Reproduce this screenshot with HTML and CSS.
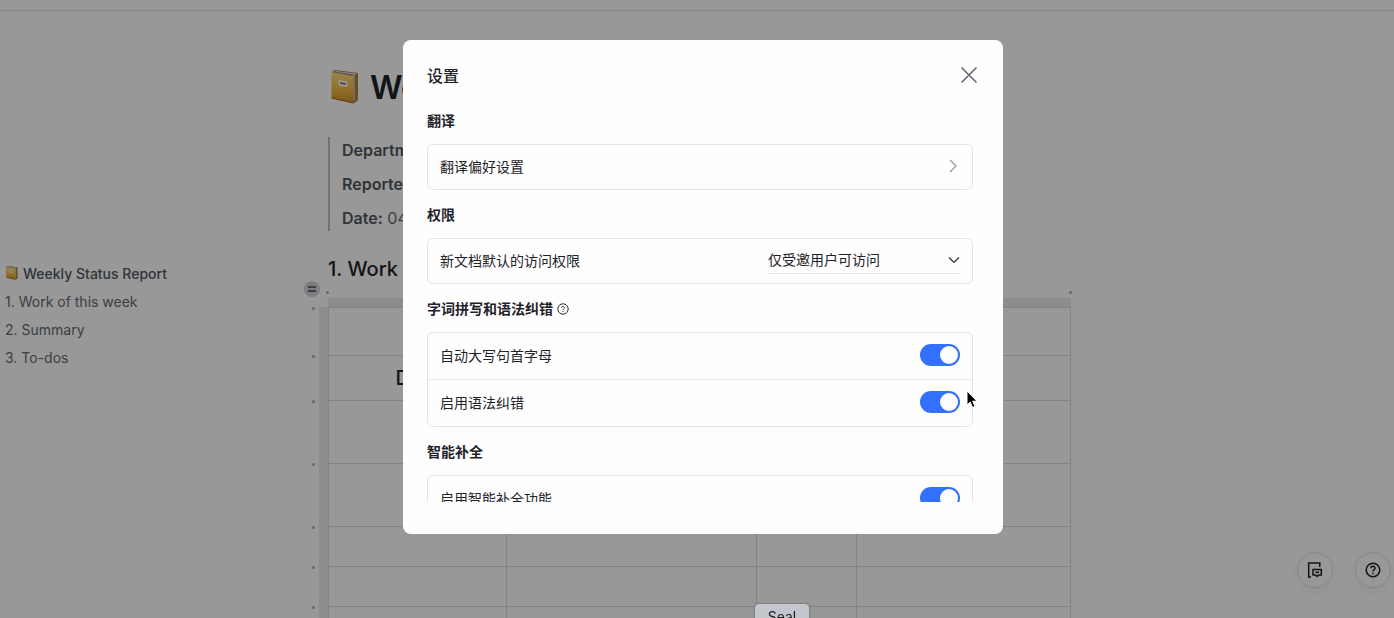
FILE: index.html
```
<!DOCTYPE html>
<html lang="zh-CN">
<head>
    <meta charset="UTF-8">
    <meta name="viewport" content="width=device-width, initial-scale=1.0">
    <title>Weekly Status Report</title>
    <link rel="stylesheet" href="styles.css">
</head>
<body>
    <svg class="defs" aria-hidden="true">
        <defs>
            <linearGradient id="cover" x1="0" y1="0" x2="0" y2="1">
                <stop offset="0" stop-color="#ffdc83"/>
                <stop offset="0.6" stop-color="#efb93f"/>
                <stop offset="1" stop-color="#c98c22"/>
            </linearGradient>
        </defs>
        <symbol id="book" viewBox="0 0 28 34">
            <path d="M1 2 4 0 27 3 27 30 23 33 1 28Z" fill="#a87835"/>
            <path d="M2 2 5 1 25 3.500 24 30 22 31 21 5Z" fill="#e9e4e8"/>
            <path d="M3 2 23 5 23 31" fill="none" stroke="#8b8490" stroke-width="1"/>
            <path d="M24 5 27 3 27 30 24 32.500Z" fill="#b4803b"/>
            <path d="M0.500 2 22.500 6 22.500 33 0.500 28Z" fill="url(#cover)"/>
            <path d="M0.500 28 22.500 33" stroke="#955c22" stroke-width="1"/>
            <path d="M8 10 16 11.300 Q17 13.500 16 17 L8 15.700 Q6.700 13 8 10Z" fill="#fffaf0"/>
            <path d="M9 13 15 14" stroke="#77664c" stroke-width="1.300"/>
        </symbol>
    </svg>

    <header class="topbar"></header>
    <div class="page">
        <nav class="outline">
            <a class="outline-title" href="#top"><svg class="book-small"><use href="#book"/></svg>Weekly Status Report</a>
            <a href="#work">1. Work of this week</a>
            <a href="#summary">2. Summary</a>
            <a href="#todos">3. To-dos</a>
        </nav>
        <main class="doc" id="top">
            <h1><svg class="book"><use href="#book"/></svg>Weekly Status Report</h1>
            <blockquote>
                <p><b>Department:</b></p>
                <p><b>Reporter:</b></p>
                <p><b>Date:</b> 04</p>
            </blockquote>
            <h2 id="work">1. Work of this week</h2>
            <div class="table-top">
                <button class="block-menu" aria-label="Block menu"></button>
                <div class="column-handle"></div>
            </div>
            <table>
                <colgroup>
                    <col class="col-handle">
                    <col class="col-date">
                    <col class="col-work">
                    <col class="col-status">
                    <col>
                </colgroup>
                <tr class="row-title"><td class="handle"></td><td colspan="4"></td></tr>
                <tr class="row-head"><td class="handle"></td><th>Date</th><th></th><th></th><th></th></tr>
                <tr class="row-tall"><td class="handle"></td><td></td><td></td><td></td><td></td></tr>
                <tr class="row-tall"><td class="handle"></td><td></td><td></td><td></td><td></td></tr>
                <tr><td class="handle"></td><td></td><td></td><td></td><td></td></tr>
                <tr><td class="handle"></td><td></td><td></td><td></td><td></td></tr>
                <tr><td class="handle"></td><td></td><td></td><td></td><td></td></tr>
            </table>
        </main>
    </div>

    <div class="float-buttons">
        <button aria-label="Comments">
            <svg width="18" height="18" viewBox="0 0 18 18" fill="none" stroke="#1f2329" stroke-width="1.500">
                <path d="M5 16H2.700V2H13.800V6"/>
                <path d="M7 8.500H15.300V14H12.800L11.200 15.500 9.600 14H7Z"/>
                <path d="M9.500 11.300H13"/>
            </svg>
        </button>
        <button aria-label="Help">
            <svg width="18" height="18" viewBox="0 0 18 18" fill="none" stroke="#1f2329" stroke-width="1.500">
                <circle cx="9" cy="9" r="6.800"/>
                <path d="M6.900 7.300C6.900 4.600 11.200 4.700 11.100 7.200 11 8.700 9 8.700 9 10.500"/>
                <path d="M9 11.700V13.200"/>
            </svg>
        </button>
    </div>

    <div class="overlay">
        <section class="modal" role="dialog" aria-modal="true" aria-labelledby="modalTitle">
            <div class="modal-header">
                <h3 id="modalTitle">设置</h3>
                <button class="close" aria-label="关闭">
                    <svg width="24" height="24" viewBox="0 0 24 24" fill="none" stroke="#646a73" stroke-width="1.600"><path d="M4.500 4.500 19.500 19.500M19.500 4.500 4.500 19.500"/></svg>
                </button>
            </div>
            <div class="modal-body">
                <h4>翻译</h4>
                <div class="card">
                    <button class="row">
                        <span>翻译偏好设置</span>
                        <svg width="14" height="14" viewBox="0 0 14 14" fill="none" stroke="#8f959e" stroke-width="1.200"><path d="M4 1 10 7 4 13"/></svg>
                    </button>
                </div>
                <h4>权限</h4>
                <div class="card">
                    <div class="row">
                        <label for="access">新文档默认的访问权限</label>
                        <div class="select">
                            <select id="access"><option>仅受邀用户可访问</option></select>
                            <svg width="12" height="12" viewBox="0 0 12 12" fill="none" stroke="#2b2f36" stroke-width="1.200"><path d="M1 3.500 6 8.500 11 3.500"/></svg>
                        </div>
                    </div>
                </div>
                <h4>字词拼写和语法纠错
                    <svg width="12" height="12" viewBox="0 0 12 12" fill="none" stroke="#2b2f36" stroke-width="1"><circle cx="6" cy="6" r="5.200"/><path d="M4.500 4.900C4.500 3 7.500 3 7.500 4.800 7.500 5.800 6 5.900 6 7.200M6 8V9"/></svg>
                </h4>
                <div class="card">
                    <div class="row toggle-row">
                        <label for="capital">自动大写句首字母</label>
                        <input class="switch" type="checkbox" id="capital" checked>
                    </div>
                    <div class="row toggle-row">
                        <label for="grammar">启用语法纠错</label>
                        <input class="switch" type="checkbox" id="grammar" checked>
                    </div>
                </div>
                <h4>智能补全</h4>
                <div class="card">
                    <div class="row toggle-row">
                        <label for="complete">启用智能补全功能</label>
                        <input class="switch" type="checkbox" id="complete" checked>
                    </div>
                </div>
            </div>
        </section>
    </div>

    <div class="tooltip">Seal</div>
    <svg class="cursor" width="13" height="20" viewBox="0 0 13 20"><path d="M1 1V15L4.300 12 6.500 17.500 9 16.400 6.700 11.200H11Z" fill="#000" stroke="#fff" stroke-width="1"/></svg>
</body>
</html>
```
FILE: styles.css
```
* {
    box-sizing: border-box;
}
body {
    margin: 0;
    height: 100vh;
    overflow: hidden;
    background-color: #fdfdfd;
    color: #1f2329;
    font-family: Inter, "Noto Sans CJK SC", sans-serif;
    font-size: 14px;
}
h1, h2, h3, h4, p, blockquote {
    margin: 0;
}
button {
    padding: 0;
    border: none;
    background: none;
    color: inherit;
    font: inherit;
    cursor: pointer;
}
svg {
    display: block;
    flex: none;
}
.defs {
    position: absolute;
    width: 0;
    height: 0;
}
.topbar {
    height: 11px;
    border-bottom: 1px solid #dee0e3;
}

/* document */
.page {
    display: grid;
    grid-template-columns: 304px 1fr;
    padding-right: 323px;
}
.outline {
    display: flex;
    flex-direction: column;
    padding: 248px 0 0 5px;
}
.outline a {
    display: flex;
    align-items: center;
    height: 28px;
    color: #646a73;
    text-decoration: none;
}
.outline .outline-title {
    gap: 4px;
    color: #51565d;
    font-weight: 500;
}
.book-small {
    width: 14px;
    height: 14px;
}
.doc {
    min-width: 0;
    padding-top: 52px;
}
h1 {
    display: flex;
    align-items: center;
    gap: 11px;
    height: 48px;
    padding-left: 27px;
    font-size: 32px;
    font-weight: 600;
    white-space: nowrap;
}
.book {
    width: 28px;
    height: 34px;
}
blockquote {
    margin: 26px 0 0 24px;
    padding-left: 12px;
    border-left: 2px solid #bbbfc4;
    color: #646a73;
    font-size: 16px;
    line-height: 26px;
}
blockquote p + p {
    margin-top: 8px;
}
blockquote b {
    color: #51565d;
    font-weight: 600;
}
h2 {
    margin-top: 22px;
    padding-left: 24px;
    font-size: 20px;
    font-weight: 500;
    line-height: 32px;
}
.table-top {
    display: flex;
    align-items: flex-end;
    gap: 8px;
    height: 22px;
}
.block-menu {
    width: 16px;
    height: 16px;
    margin-bottom: 10px;
    border-radius: 50%;
    background: linear-gradient(#646a73, #646a73) center 5px / 8px 2px no-repeat,
        linear-gradient(#646a73, #646a73) center 9px / 8px 2px no-repeat, #d0d3d6;
}
.column-handle {
    position: relative;
    flex: 1;
    height: 9px;
    background-color: #e8eaec;
}
.column-handle::before,
.column-handle::after,
.handle::before {
    content: "";
    position: absolute;
    width: 3px;
    height: 3px;
    border-radius: 50%;
    background-color: #a9acb1;
}
.column-handle::before {
    top: -7px;
    left: -2px;
}
.column-handle::after {
    top: -7px;
    right: -1px;
}
table {
    width: 100%;
    table-layout: fixed;
    border-spacing: 0;
}
.col-handle {
    width: 24px;
}
.col-date {
    width: 179px;
}
.col-work {
    width: 250px;
}
.col-status {
    width: 100px;
}
tr {
    height: 40px;
}
.row-title {
    height: 48px;
}
.row-head {
    height: 45px;
}
.row-tall {
    height: 63px;
}
td, th {
    padding: 0;
    border-top: 1px solid #d9dadd;
    border-right: 1px solid #d9dadd;
    font-size: 20px;
    font-weight: 500;
}
td:nth-child(2), th:nth-child(2) {
    border-left: 1px solid #d9dadd;
}
.handle {
    position: relative;
    border-top: none;
    border-right: 9px solid #e8eaec;
}
.handle::before {
    top: 0;
    left: 8px;
}

/* floating buttons */
.float-buttons {
    position: fixed;
    right: 3px;
    bottom: 30px;
    display: flex;
    gap: 22px;
}
.float-buttons button {
    display: grid;
    place-items: center;
    width: 36px;
    height: 36px;
    border: 1px solid #dee0e3;
    border-radius: 50%;
    box-shadow: 0 4px 8px rgba(31, 35, 41, 0.04);
}

/* settings dialog */
.overlay {
    position: fixed;
    inset: 0;
    display: flex;
    justify-content: center;
    align-items: flex-start;
    padding: 40px 0 0 12px;
    background-color: rgba(0, 0, 0, 0.4);
}
.modal {
    display: flex;
    flex-direction: column;
    width: 600px;
    max-height: calc(100vh - 124px);
    padding: 23px 24px 32px;
    border-radius: 8px;
    background-color: #fefefe;
}
.modal-header {
    display: flex;
    justify-content: space-between;
    align-items: center;
    height: 24px;
}
.modal-header h3 {
    font-size: 16px;
    font-weight: 500;
}
.close {
    margin-right: -2px;
}
.modal-body {
    overflow-y: auto;
    scrollbar-width: none;
    padding: 23px 6px 0 0;
}
.modal-body h4 {
    display: flex;
    align-items: center;
    gap: 4px;
    margin-bottom: 12px;
    font-size: 14px;
    font-weight: 600;
    line-height: 22px;
}
.card {
    margin-bottom: 14px;
    border: 1px solid #e2e3e5;
    border-radius: 6px;
}
.row {
    display: flex;
    justify-content: space-between;
    align-items: center;
    width: 100%;
    height: 44px;
    padding: 0 12px 2px;
}
.toggle-row {
    height: 46px;
}
.toggle-row + .toggle-row {
    height: 47px;
    border-top: 1px solid #e8e9eb;
}
.select {
    position: relative;
    width: 192px;
}
.select select {
    appearance: none;
    width: 100%;
    height: 28px;
    padding: 0;
    border: none;
    border-bottom: 1px solid #e2e3e5;
    background: none;
    color: inherit;
    font: inherit;
}
.select svg {
    position: absolute;
    top: 8px;
    right: 0;
    pointer-events: none;
}
.switch {
    appearance: none;
    width: 40px;
    height: 22px;
    margin: 0;
    padding: 2px;
    border-radius: 11px;
    background-color: #bbbfc4;
    cursor: pointer;
}
.switch::before {
    content: "";
    display: block;
    width: 18px;
    height: 18px;
    border-radius: 50%;
    background-color: #fff;
}
.switch:checked {
    background-color: #3370ff;
}
.switch:checked::before {
    margin-left: auto;
}

.tooltip {
    position: fixed;
    left: 755px;
    top: 604px;
    width: 54px;
    border-radius: 4px;
    background-color: #c4c6cd;
    box-shadow: 0 0 2px rgba(0, 0, 0, 0.5);
    color: #1a1a1a;
    line-height: 26px;
    text-align: center;
}
.cursor {
    position: fixed;
    left: 966px;
    top: 390px;
}
```
